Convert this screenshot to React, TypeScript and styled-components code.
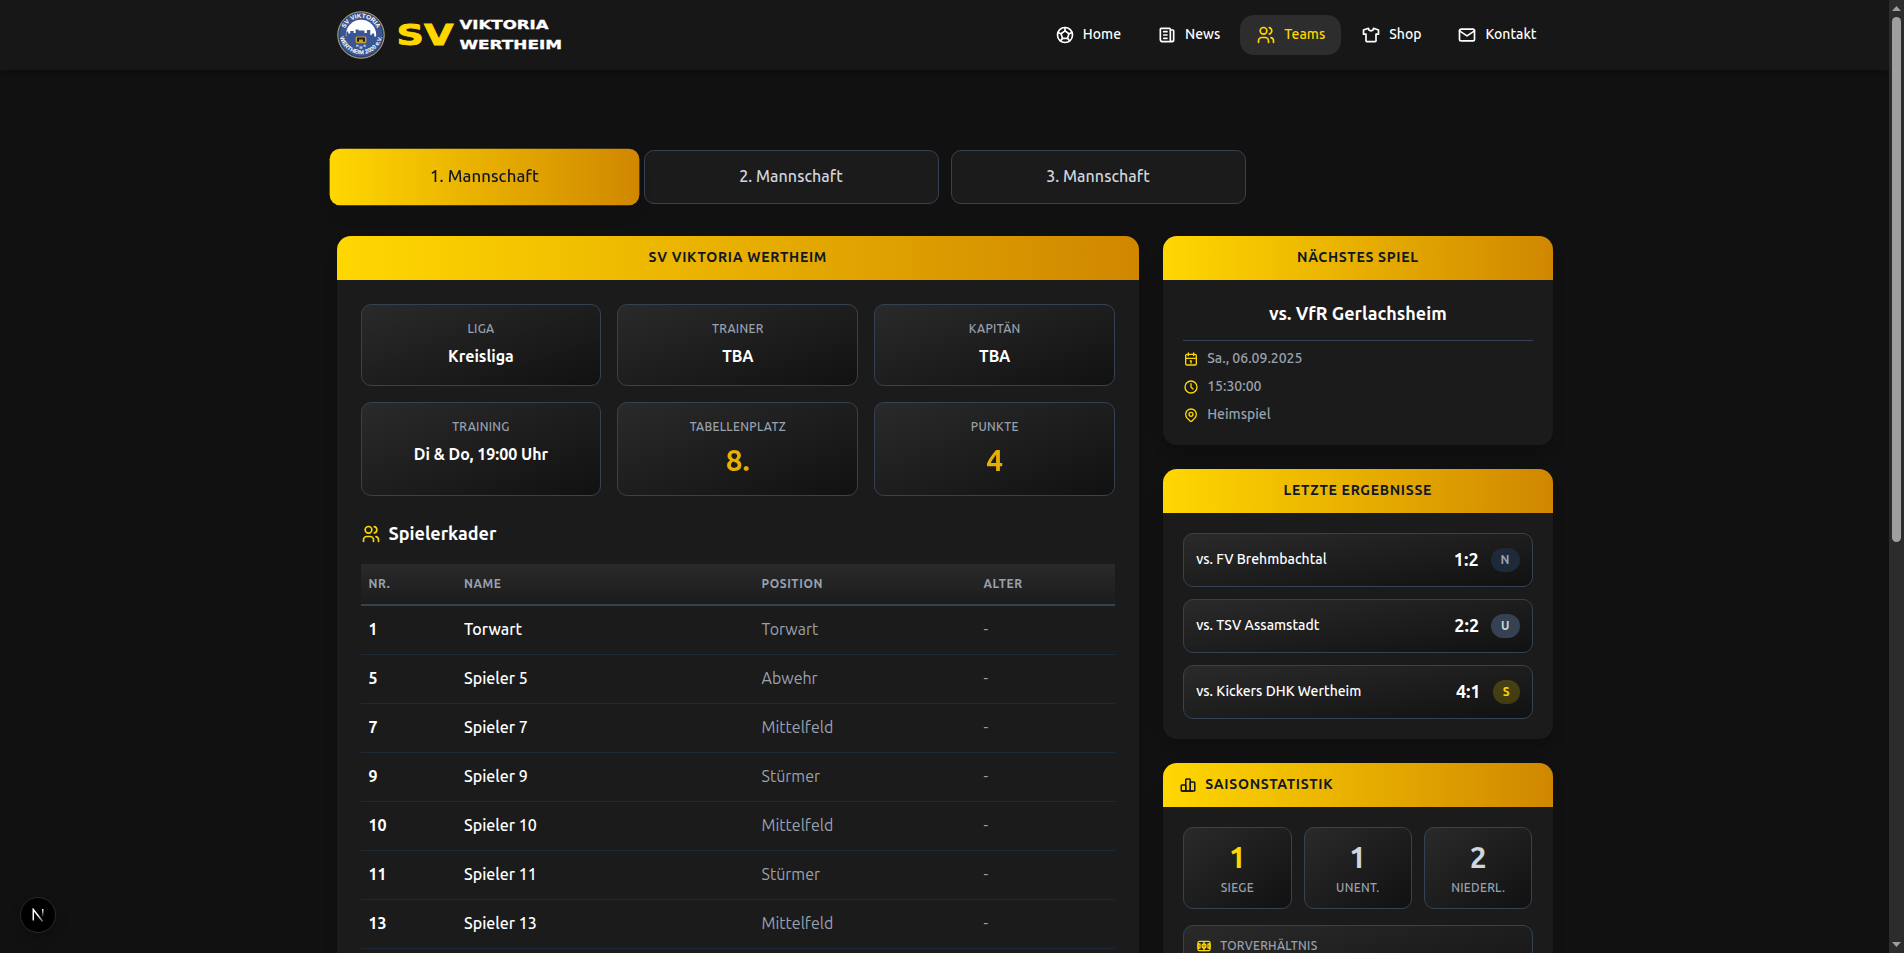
import React from 'react';
import styled, { createGlobalStyle, css } from 'styled-components';
import {
  TbBallFootball, TbNews, TbUsers, TbShirt, TbMail, TbCalendar,
  TbClock, TbMapPin, TbChartBar, TbSoccerField,
} from 'react-icons/tb';

const color = {
  page: '#111111',
  nav: '#171717',
  card: '#1b1b1b',
  gold: '#ffd700',
  ochre: '#d08700',
  white: '#ffffff',
  gray300: '#d1d5dc',
  gray400: '#99a1af',
  gray700: '#364153',
  gray800: '#1e2939',
  gray900: '#101828',
};

const radius = { box: '10px', card: '14px' };

const goldGradient = `linear-gradient(to right, ${color.gold}, ${color.ochre})`;

const GlobalStyle = createGlobalStyle`
  * { box-sizing: border-box; }
  body {
    margin: 0;
    background: ${color.page};
    color: ${color.white};
    font-family: Ubuntu, "Noto Sans", "Open Sans", sans-serif;
    font-size: 16px;
    line-height: 24px;
    overflow: hidden;
  }
  h2, h3, p, ul, dl, dt, dd { margin: 0; padding: 0; }
  ul { list-style: none; }
`;

const Shell = styled.div`
  display: flex;
  height: 100vh;
  overflow: hidden;
`;

const Page = styled.div`
  flex: 1;
  min-width: 0;
  overflow: hidden;
`;

const Container = styled.div`
  width: 1280px;
  margin: 0 auto;
  padding: 0 32px;
`;

/* Text beside an icon sits one pixel above the icon's centre line. */
const Caption = styled.span`
  margin-top: -2px;
`;

/* Navigation */

const NavBar = styled.header`
  background: ${color.nav};
  box-shadow: 0 4px 8px rgba(0, 0, 0, 0.25);
`;

const NavInner = styled(Container)`
  display: flex;
  align-items: center;
  justify-content: space-between;
  height: 70px;
`;

const Brand = styled.a`
  display: flex;
  align-items: center;
  gap: 12px;
`;

const NavList = styled.nav`
  display: flex;
  gap: 4px;
`;

const NavLink = styled.a<{ $active?: boolean }>`
  display: flex;
  align-items: center;
  gap: 8px;
  height: 40px;
  padding: 0 16px;
  border-radius: ${radius.card};
  font-size: 14px;
  font-weight: 500;
  line-height: 20px;
  color: ${p => (p.$active ? color.gold : color.white)};
  background: ${p => (p.$active ? '#2d2d2d' : 'transparent')};
`;

/* Team tabs */

const Main = styled.main`
  padding-top: 80px;
`;

const Tabs = styled.div`
  display: grid;
  grid-template-columns: repeat(4, 1fr);
  gap: 12px;
  margin-bottom: 32px;
`;

const Tab = styled.button<{ $active?: boolean }>`
  height: 54px;
  border: 1px solid ${color.gray700};
  border-radius: ${radius.box};
  background: ${color.card};
  color: ${color.gray300};
  font: 500 16px/24px Ubuntu, "Noto Sans", "Open Sans", sans-serif;
  letter-spacing: 0.05px;
  padding: 0 0 2px;
  ${p => p.$active && css`
    border: 0;
    background: ${goldGradient};
    color: ${color.gray900};
    transform: scale(1.05);
    box-shadow: 0 10px 15px -3px rgba(0, 0, 0, 0.15);
  `}
`;

/* Cards */

const Columns = styled.div`
  display: grid;
  grid-template-columns: repeat(3, 1fr);
  gap: 24px;
  align-items: start;
`;

const Sidebar = styled.aside`
  display: flex;
  flex-direction: column;
  gap: 24px;
`;

const Card = styled.section<{ $wide?: boolean }>`
  grid-column: span ${p => (p.$wide ? 2 : 1)};
  overflow: hidden;
  border-radius: ${radius.card};
  background: ${color.card};
  box-shadow: 0 10px 15px -3px rgba(0, 0, 0, 0.2);
`;

const CardHeader = styled.h2<{ $start?: boolean }>`
  display: flex;
  align-items: center;
  justify-content: ${p => (p.$start ? 'flex-start' : 'center')};
  gap: 8px;
  height: 44px;
  padding: 0 16px;
  background: ${goldGradient};
  color: ${color.gray900};
  font-size: 14px;
  font-weight: 600;
  line-height: 20px;
  letter-spacing: 0.05em;
  text-transform: uppercase;
`;

const CardBody = styled.div<{ $pad: number }>`
  padding: ${p => p.$pad}px;
`;

const panel = css`
  border: 1px solid ${color.gray700};
  border-radius: ${radius.box};
  background: linear-gradient(to bottom right, #2a2a2a, #111111);
`;

const InfoGrid = styled.dl`
  display: grid;
  grid-template-columns: repeat(3, 1fr);
  gap: 16px;
`;

const InfoBox = styled.div`
  ${panel}
  padding: 16px;
  text-align: center;
`;

const Label = styled.dt`
  color: ${color.gray400};
  font-size: 12px;
  font-weight: 500;
  line-height: 16px;
  letter-spacing: 0.025em;
  text-transform: uppercase;
`;

const InfoValue = styled.dd<{ $big?: boolean }>`
  margin: 7px 0 1px;
  font-weight: 600;
  ${p => p.$big && css`
    font-size: 30px;
    font-weight: 700;
    line-height: 36px;
    background: ${goldGradient};
    background-clip: text;
    color: transparent;
  `}
`;

const SquadTitle = styled.h3`
  display: flex;
  align-items: center;
  gap: 8px;
  height: 28px;
  margin: 24px 0 16px;
  font-size: 18px;
  font-weight: 600;
  line-height: 28px;
  svg { color: ${color.gold}; }
`;

const Table = styled.table`
  width: 100%;
  table-layout: fixed;
  border-collapse: separate;
  border-spacing: 0;
`;

const Col = styled.col<{ $w?: string }>`
  width: ${p => p.$w ?? 'auto'};
`;

const HeadCell = styled.th`
  padding: 12px 8px;
  border-bottom: 2px solid ${color.gray700};
  background: linear-gradient(to bottom, #2a2a2a, ${color.card}) border-box;
  color: ${color.gray400};
  font-size: 12px;
  font-weight: 600;
  line-height: 16px;
  letter-spacing: 0.05em;
  text-align: left;
  text-transform: uppercase;
`;

const Cell = styled.td<{ $tone?: 'number' | 'name' }>`
  padding: 11px 8px 13px;
  border-bottom: 1px solid ${color.gray800};
  color: ${p => (p.$tone ? color.white : color.gray400)};
  font-weight: ${p => (p.$tone === 'number' ? 700 : p.$tone === 'name' ? 500 : 400)};
`;

/* Next match */

const MatchTitle = styled.h3`
  margin-top: -1px;
  padding-bottom: 13px;
  border-bottom: 1px solid ${color.gray700};
  font-size: 18px;
  font-weight: 600;
  line-height: 28px;
  text-align: center;
`;

const MatchFacts = styled.ul`
  display: flex;
  flex-direction: column;
  gap: 8px;
  padding-top: 8px;
`;

const MatchFact = styled.li`
  display: flex;
  align-items: center;
  gap: 8px;
  height: 20px;
  color: ${color.gray400};
  font-size: 14px;
  font-weight: 500;
  line-height: 20px;
  svg { color: ${color.gold}; }
`;

/* Results */

const Results = styled.ul`
  display: flex;
  flex-direction: column;
  gap: 12px;
`;

const Result = styled.li`
  ${panel}
  display: flex;
  align-items: center;
  justify-content: space-between;
  height: 54px;
  padding: 0 12px;
  font-size: 14px;
  font-weight: 500;
  line-height: 20px;
`;

const ResultRight = styled.div`
  display: flex;
  align-items: center;
  gap: 12px;
`;

const Score = styled(Caption)`
  font-size: 18px;
  font-weight: 700;
  line-height: 28px;
`;

type Outcome = 'N' | 'U' | 'S';
const outcomeColors: Record<Outcome, [string, string]> = {
  N: [color.gray800, color.gray400],
  U: [color.gray700, color.gray300],
  S: ['rgba(255, 215, 0, 0.2)', color.gold],
};

const Badge = styled.span<{ $outcome: Outcome }>`
  padding: 4px 10px;
  border-radius: 12px;
  font-size: 12px;
  font-weight: 600;
  line-height: 16px;
  background: ${p => outcomeColors[p.$outcome][0]};
  color: ${p => outcomeColors[p.$outcome][1]};
`;

/* Season statistics */

const StatGrid = styled.dl`
  display: grid;
  grid-template-columns: repeat(3, 1fr);
  gap: 12px;
  margin-bottom: 16px;
`;

const StatBox = styled.div`
  ${panel}
  display: flex;
  flex-direction: column-reverse;
  gap: 5px;
  padding: 11px 12px 12px;
  text-align: center;
`;

const StatValue = styled.dd<{ $gold?: boolean }>`
  font-size: 30px;
  font-weight: 700;
  line-height: 36px;
  color: ${p => (p.$gold ? color.gold : color.gray300)};
`;

const GoalBox = styled.dl`
  ${panel}
  height: 82px;
  padding: 12px;
`;

const GoalLabel = styled(Label)`
  display: flex;
  align-items: center;
  gap: 8px;
  svg { color: ${color.gold}; }
`;

/* Window chrome */

const ScrollTrack = styled.div`
  display: flex;
  flex-direction: column;
  align-items: center;
  width: 15px;
  padding: 6px 0;
  background: #2c2c2c;
`;

const ScrollThumb = styled.div`
  width: 9px;
  height: 525px;
  margin: 6px 0 auto;
  border-radius: 5px;
  background: #9f9f9f;
`;

const Arrow = styled.div<{ $down?: boolean }>`
  width: 9px;
  height: 5px;
  background: #9f9f9f;
  clip-path: ${p => (p.$down ? 'polygon(0 0, 100% 0, 50% 100%)' : 'polygon(50% 0, 100% 100%, 0 100%)')};
`;

const DevButton = styled.button`
  position: fixed;
  left: 20px;
  bottom: 20px;
  display: grid;
  place-items: center;
  width: 36px;
  height: 36px;
  padding: 0;
  border: 1px solid #2b2b2b;
  border-radius: 50%;
  background: #000;
  box-shadow: 0 8px 16px -4px rgba(0, 0, 0, 0.3);
`;

const Crest = () => (
  <svg width="48" height="48" viewBox="0 0 98 98" aria-label="SV Viktoria Wertheim 2000 e.V.">
    <defs>
      <path id="crest-top" d="M14 49a35 35 0 0 1 70 0" />
      <path id="crest-bottom" d="M5 44a44 44 0 0 0 88 0" />
      <clipPath id="crest-clip"><circle cx="49" cy="49" r="31" /></clipPath>
    </defs>
    <circle cx="49" cy="49" r="47.500" fill="#3c5590" stroke="#b9a968" strokeWidth="2" />
    <circle cx="49" cy="49" r="44.500" fill="none" stroke="#2b3f77" strokeWidth="2" />
    <g clipPath="url(#crest-clip)">
      <rect x="18" y="18" width="62" height="62" fill="#3a5596" />
      <path
        fill="#fff"
        d="M16 52V16h66v36h-6v-6h-5v3h-3V39h-7v6h-5v-5h-12v-2h-6v7h-4v-4h-7v5h-4v-4h-4v10z"
      />
      <rect x="38" y="52" width="22" height="14" rx="3" fill="#c9a227" />
      <path fill="#1c1c1c" d="M41 54h16v9h-4v-5h-8v5h-4z" />
      <path fill="#a9c2e4" d="M39 69h5v4h-5zM46 72h6v5h-6zM54 69h5v4h-5z" />
    </g>
    <g fill="#fff" fontFamily='"Liberation Sans", sans-serif' fontWeight="700">
      <text fontSize="13">
        <textPath href="#crest-top" startOffset="50%" textAnchor="middle">SV VIKTORIA</textPath>
      </text>
      <text fontSize="12">
        <textPath href="#crest-bottom" startOffset="50%" textAnchor="middle">WERTHEIM 2000 e.V.</textPath>
      </text>
    </g>
  </svg>
);

const Wordmark = () => (
  <svg
    width="166" height="40" viewBox="0 0 166 40"
    fontFamily='"DejaVu Sans", sans-serif' fontWeight="700" aria-label="SV Viktoria Wertheim"
  >
    <text
      x="-0.500" y="30" fontSize="28.500" fill={color.gold} stroke={color.gold} strokeWidth="0.800"
      textLength="57" lengthAdjust="spacingAndGlyphs"
    >
      SV
    </text>
    <g fill={color.white} stroke={color.white} strokeWidth="0.300" fontSize="12">
      <text x="62.500" y="13.800" textLength="89" lengthAdjust="spacingAndGlyphs">VIKTORIA</text>
      <text x="62.500" y="34" textLength="102.500" lengthAdjust="spacingAndGlyphs">WERTHEIM</text>
    </g>
  </svg>
);

const NextMark = () => (
  <svg width="14" height="14" viewBox="0 0 14 14" fill="none">
    <defs>
      <linearGradient id="next-diagonal" x1="7" y1="7" x2="12" y2="14" gradientUnits="userSpaceOnUse">
        <stop stopColor="#fff" /><stop offset="1" stopColor="#fff" stopOpacity="0.300" />
      </linearGradient>
      <linearGradient id="next-stem" x1="11" y1="1" x2="11" y2="9" gradientUnits="userSpaceOnUse">
        <stop stopColor="#fff" /><stop offset="1" stopColor="#fff" stopOpacity="0" />
      </linearGradient>
    </defs>
    <path d="M2.300 12.500v-11l9.400 12" stroke="url(#next-diagonal)" strokeWidth="1.500" />
    <path d="M11 1h1.500v8H11z" fill="url(#next-stem)" />
  </svg>
);

const navItems = [
  { icon: TbBallFootball, text: 'Home' },
  { icon: TbNews, text: 'News' },
  { icon: TbUsers, text: 'Teams', active: true },
  { icon: TbShirt, text: 'Shop' },
  { icon: TbMail, text: 'Kontakt' },
];

const info: { label: string; value: string; big?: boolean }[] = [
  { label: 'Liga', value: 'Kreisliga' },
  { label: 'Trainer', value: 'TBA' },
  { label: 'Kapitän', value: 'TBA' },
  { label: 'Training', value: 'Di & Do, 19:00 Uhr' },
  { label: 'Tabellenplatz', value: '8.', big: true },
  { label: 'Punkte', value: '4', big: true },
];

const squad: [number, string, string][] = [
  [1, 'Torwart', 'Torwart'],
  [5, 'Spieler 5', 'Abwehr'],
  [7, 'Spieler 7', 'Mittelfeld'],
  [9, 'Spieler 9', 'Stürmer'],
  [10, 'Spieler 10', 'Mittelfeld'],
  [11, 'Spieler 11', 'Stürmer'],
  [13, 'Spieler 13', 'Mittelfeld'],
];

const results: { team: string; score: string; outcome: Outcome }[] = [
  { team: 'FV Brehmbachtal', score: '1:2', outcome: 'N' },
  { team: 'TSV Assamstadt', score: '2:2', outcome: 'U' },
  { team: 'Kickers DHK Wertheim', score: '4:1', outcome: 'S' },
];

const stats = [
  { label: 'Siege', value: 1, gold: true },
  { label: 'Unent.', value: 1 },
  { label: 'Niederl.', value: 2 },
];

const facts = [
  { icon: TbCalendar, text: 'Sa., 06.09.2025' },
  { icon: TbClock, text: '15:30:00' },
  { icon: TbMapPin, text: 'Heimspiel' },
];

export default function App() {
  return (
    <>
      <GlobalStyle />
      <Shell>
        <Page>
          <NavBar>
            <NavInner>
              <Brand><Crest /><Wordmark /></Brand>
              <NavList>
                {navItems.map(({ icon: Icon, text, active }) => (
                  <NavLink key={text} $active={active}><Icon size={20} /><Caption>{text}</Caption></NavLink>
                ))}
              </NavList>
            </NavInner>
          </NavBar>
          <Main>
            <Container>
              <Tabs>
                <Tab $active>1. Mannschaft</Tab>
                <Tab>2. Mannschaft</Tab>
                <Tab>3. Mannschaft</Tab>
              </Tabs>
              <Columns>
                <Card $wide>
                  <CardHeader><Caption>SV Viktoria Wertheim</Caption></CardHeader>
                  <CardBody $pad={24}>
                    <InfoGrid>
                      {info.map(i => (
                        <InfoBox key={i.label}>
                          <Label>{i.label}</Label>
                          <InfoValue $big={i.big}>{i.value}</InfoValue>
                        </InfoBox>
                      ))}
                    </InfoGrid>
                    <SquadTitle><TbUsers size={20} /><Caption>Spielerkader</Caption></SquadTitle>
                    <Table>
                      <colgroup>
                        <Col $w="95.5px" /><Col $w="297.5px" /><Col $w="222px" /><Col />
                      </colgroup>
                      <thead>
                        <tr>
                          <HeadCell>Nr.</HeadCell>
                          <HeadCell>Name</HeadCell>
                          <HeadCell>Position</HeadCell>
                          <HeadCell>Alter</HeadCell>
                        </tr>
                      </thead>
                      <tbody>
                        {squad.map(([nr, name, position]) => (
                          <tr key={nr}>
                            <Cell $tone="number">{nr}</Cell>
                            <Cell $tone="name">{name}</Cell>
                            <Cell>{position}</Cell>
                            <Cell>-</Cell>
                          </tr>
                        ))}
                      </tbody>
                    </Table>
                  </CardBody>
                </Card>
                <Sidebar>
                  <Card>
                    <CardHeader><Caption>Nächstes Spiel</Caption></CardHeader>
                    <CardBody $pad={20}>
                      <MatchTitle>vs. VfR Gerlachsheim</MatchTitle>
                      <MatchFacts>
                        {facts.map(({ icon: Icon, text }) => (
                          <MatchFact key={text}><Icon size={16} /><Caption>{text}</Caption></MatchFact>
                        ))}
                      </MatchFacts>
                    </CardBody>
                  </Card>
                  <Card>
                    <CardHeader><Caption>Letzte Ergebnisse</Caption></CardHeader>
                    <CardBody $pad={20}>
                      <Results>
                        {results.map(r => (
                          <Result key={r.team}>
                            <Caption>vs. {r.team}</Caption>
                            <ResultRight>
                              <Score>{r.score}</Score>
                              <Badge $outcome={r.outcome}>{r.outcome}</Badge>
                            </ResultRight>
                          </Result>
                        ))}
                      </Results>
                    </CardBody>
                  </Card>
                  <Card>
                    <CardHeader $start><TbChartBar size={18} /><Caption>Saisonstatistik</Caption></CardHeader>
                    <CardBody $pad={20}>
                      <StatGrid>
                        {stats.map(s => (
                          <StatBox key={s.label}>
                            <Label>{s.label}</Label>
                            <StatValue $gold={s.gold}>{s.value}</StatValue>
                          </StatBox>
                        ))}
                      </StatGrid>
                      <GoalBox>
                        <GoalLabel><TbSoccerField size={16} />Torverhältnis</GoalLabel>
                      </GoalBox>
                    </CardBody>
                  </Card>
                </Sidebar>
              </Columns>
            </Container>
          </Main>
        </Page>
        <ScrollTrack>
          <Arrow />
          <ScrollThumb />
          <Arrow $down />
        </ScrollTrack>
      </Shell>
      <DevButton aria-label="Next.js Dev Tools"><NextMark /></DevButton>
    </>
  );
}
